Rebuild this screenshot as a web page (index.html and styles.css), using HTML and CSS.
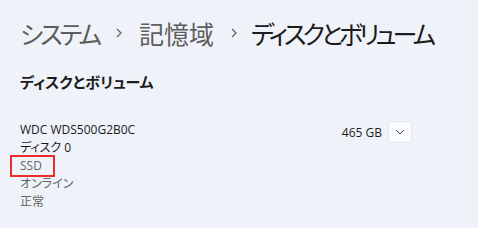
FILE: index.html
```html
<!DOCTYPE html>
<html lang="ja">
<head>
    <meta charset="UTF-8">
    <title>ディスクとボリューム</title>
    <link rel="stylesheet" href="styles.css">
</head>
<body>
    <div class="breadcrumb">
        <span class="crumb kana">システム</span>
        <span class="sep">
            <svg width="6" height="10" viewBox="0 0 6 10"><path d="M1 1 L5 5 L1 9" fill="none" stroke="#666" stroke-width="1.3"/></svg>
        </span>
        <span class="crumb">記憶域</span>
        <span class="sep">
            <svg width="6" height="10" viewBox="0 0 6 10"><path d="M1 1 L5 5 L1 9" fill="none" stroke="#666" stroke-width="1.3"/></svg>
        </span>
        <span class="crumb current">ディスクとボリューム</span>
    </div>

    <h2 class="section-title">ディスクとボリューム</h2>

    <div class="disk-row">
        <div class="disk-info">
            <div class="line">WDC WDS500G2B0C</div>
            <div class="line">ディスク 0</div>
            <div class="line sub"><span class="marked">SSD</span></div>
            <div class="line sub">オンライン</div>
            <div class="line sub">正常</div>
        </div>
        <div class="disk-size">
            <span>465 GB</span>
            <button class="expand" aria-label="展開">
                <svg width="10" height="6" viewBox="0 0 10 6">
                    <path d="M1 1 L5 5 L9 1" fill="none" stroke="#444" stroke-width="1"/>
                </svg>
            </button>
        </div>
    </div>
</body>
</html>
```

FILE: styles.css
```css
body {
    margin: 0;
    padding: 16px 20px;
    background-color: #eff3f9;
    font-family: "Open Sans", "Noto Sans CJK JP", sans-serif;
    font-feature-settings: "palt";
    color: #1b1b1b;
}

.breadcrumb {
    display: flex;
    align-items: center;
    height: 34px;
    white-space: nowrap;
    font-family: "Noto Sans CJK JP", sans-serif;
    font-size: 25px;
    color: #5d5d5d;
}

.crumb {
    flex-shrink: 0;
}

.kana {
    letter-spacing: -3px;
}

.sep {
    display: flex;
    justify-content: center;
    width: 40px;
    flex-shrink: 0;
}

.current {
    margin-left: -3px;
    color: #1b1b1b;
    letter-spacing: -4px;
}

.section-title {
    margin: 22px 0 0;
    font-family: "Noto Sans CJK JP", sans-serif;
    font-size: 15px;
    font-weight: 600;
    line-height: 20px;
}

.disk-row {
    display: flex;
    justify-content: space-between;
    width: 392px;
    margin-top: 29px;
}

.line {
    font-size: 12px;
    line-height: 18px;
}

.sub {
    color: #646464;
}

.marked {
    position: relative;
}

.marked::after {
    content: "";
    position: absolute;
    left: -10px;
    right: -13px;
    top: -2px;
    bottom: -3px;
    border: 2px solid #ee2b2b;
}

.disk-size {
    display: flex;
    align-items: center;
    gap: 6px;
    height: 22px;
    font-size: 12px;
}

.expand {
    display: flex;
    align-items: center;
    justify-content: center;
    width: 24px;
    height: 22px;
    padding: 0;
    background-color: #fbfcfd;
    border: 1px solid #e3e6ea;
    border-radius: 3px;
}
```
